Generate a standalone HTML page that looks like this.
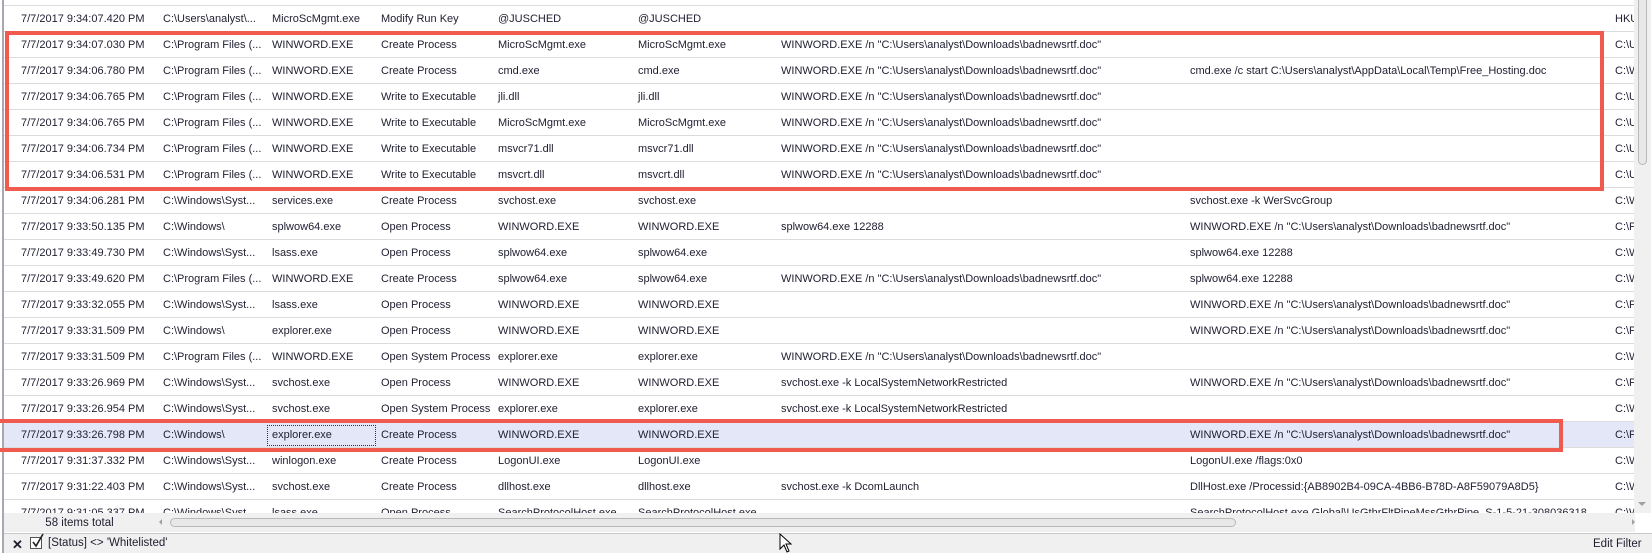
<!DOCTYPE html>
<html><head><meta charset="utf-8"><style>
*{margin:0;padding:0;box-sizing:border-box}
body{width:1652px;height:553px;overflow:hidden;background:#fff;font-family:"Liberation Sans",sans-serif;font-size:11px;color:#1e1e30;position:relative}
#grid{position:absolute;left:4px;top:0;width:1630px;height:513px;overflow:hidden;background:#fff}
.r{position:absolute;left:0;width:1630px;height:26px;border-bottom:1px solid #dcdcdc}
.r span{position:absolute;top:7px;white-space:nowrap}
.sel{background:#e3e7f7}
#lb{position:absolute;left:2px;top:0;width:2px;height:553px;background:#a8a8b0}
#vs{position:absolute;left:1634px;top:0;width:17px;height:513px;background:#f0f0f0}
#thumb{position:absolute;left:1638px;top:0;width:9px;height:165px;background:#e8e8e8;border:1px solid #b8b8b8;border-radius:0 0 5px 5px;border-top:none}
#hs{position:absolute;left:155px;top:513px;width:1480px;height:19px;background:#f0f0f0}
#hthumb{position:absolute;left:170px;top:518px;width:1066px;height:9px;border:1px solid #b8b8b8;border-radius:5px;background:#e8e8e8}
#cnt{position:absolute;left:4px;top:513px;width:151px;height:19px;background:#f0f0f0;text-align:center;line-height:20px;font-size:11.5px}
#fb{position:absolute;left:4px;top:533px;width:1648px;height:20px;background:#f0f0f0;border-top:1px solid #c8c8c8;font-size:11.5px}
.box{position:absolute;border:4px solid #f05a4f}
</style></head><body>
<div id="grid">
<div class="r" style="top:-20px"></div>
<div class="r" style="top:6px"><span style="left:17px">7/7/2017 9:34:07.420 PM</span><span style="left:159px">C:\Users\analyst\...</span><span style="left:268px">MicroScMgmt.exe</span><span style="left:377px">Modify Run Key</span><span style="left:494px">@JUSCHED</span><span style="left:634px">@JUSCHED</span><span style="left:1611px">HKU</span></div>
<div class="r" style="top:32px"><span style="left:17px">7/7/2017 9:34:07.030 PM</span><span style="left:159px">C:\Program Files (...</span><span style="left:268px">WINWORD.EXE</span><span style="left:377px">Create Process</span><span style="left:494px">MicroScMgmt.exe</span><span style="left:634px">MicroScMgmt.exe</span><span style="left:777px">WINWORD.EXE /n "C:\Users\analyst\Downloads\badnewsrtf.doc"</span><span style="left:1611px">C:\U</span></div>
<div class="r" style="top:58px"><span style="left:17px">7/7/2017 9:34:06.780 PM</span><span style="left:159px">C:\Program Files (...</span><span style="left:268px">WINWORD.EXE</span><span style="left:377px">Create Process</span><span style="left:494px">cmd.exe</span><span style="left:634px">cmd.exe</span><span style="left:777px">WINWORD.EXE /n "C:\Users\analyst\Downloads\badnewsrtf.doc"</span><span style="left:1186px">cmd.exe /c start C:\Users\analyst\AppData\Local\Temp\Free_Hosting.doc</span><span style="left:1611px">C:\W</span></div>
<div class="r" style="top:84px"><span style="left:17px">7/7/2017 9:34:06.765 PM</span><span style="left:159px">C:\Program Files (...</span><span style="left:268px">WINWORD.EXE</span><span style="left:377px">Write to Executable</span><span style="left:494px">jli.dll</span><span style="left:634px">jli.dll</span><span style="left:777px">WINWORD.EXE /n "C:\Users\analyst\Downloads\badnewsrtf.doc"</span><span style="left:1611px">C:\U</span></div>
<div class="r" style="top:110px"><span style="left:17px">7/7/2017 9:34:06.765 PM</span><span style="left:159px">C:\Program Files (...</span><span style="left:268px">WINWORD.EXE</span><span style="left:377px">Write to Executable</span><span style="left:494px">MicroScMgmt.exe</span><span style="left:634px">MicroScMgmt.exe</span><span style="left:777px">WINWORD.EXE /n "C:\Users\analyst\Downloads\badnewsrtf.doc"</span><span style="left:1611px">C:\U</span></div>
<div class="r" style="top:136px"><span style="left:17px">7/7/2017 9:34:06.734 PM</span><span style="left:159px">C:\Program Files (...</span><span style="left:268px">WINWORD.EXE</span><span style="left:377px">Write to Executable</span><span style="left:494px">msvcr71.dll</span><span style="left:634px">msvcr71.dll</span><span style="left:777px">WINWORD.EXE /n "C:\Users\analyst\Downloads\badnewsrtf.doc"</span><span style="left:1611px">C:\U</span></div>
<div class="r" style="top:162px"><span style="left:17px">7/7/2017 9:34:06.531 PM</span><span style="left:159px">C:\Program Files (...</span><span style="left:268px">WINWORD.EXE</span><span style="left:377px">Write to Executable</span><span style="left:494px">msvcrt.dll</span><span style="left:634px">msvcrt.dll</span><span style="left:777px">WINWORD.EXE /n "C:\Users\analyst\Downloads\badnewsrtf.doc"</span><span style="left:1611px">C:\U</span></div>
<div class="r" style="top:188px"><span style="left:17px">7/7/2017 9:34:06.281 PM</span><span style="left:159px">C:\Windows\Syst...</span><span style="left:268px">services.exe</span><span style="left:377px">Create Process</span><span style="left:494px">svchost.exe</span><span style="left:634px">svchost.exe</span><span style="left:1186px">svchost.exe -k WerSvcGroup</span><span style="left:1611px">C:\W</span></div>
<div class="r" style="top:214px"><span style="left:17px">7/7/2017 9:33:50.135 PM</span><span style="left:159px">C:\Windows\</span><span style="left:268px">splwow64.exe</span><span style="left:377px">Open Process</span><span style="left:494px">WINWORD.EXE</span><span style="left:634px">WINWORD.EXE</span><span style="left:777px">splwow64.exe 12288</span><span style="left:1186px">WINWORD.EXE /n "C:\Users\analyst\Downloads\badnewsrtf.doc"</span><span style="left:1611px">C:\P</span></div>
<div class="r" style="top:240px"><span style="left:17px">7/7/2017 9:33:49.730 PM</span><span style="left:159px">C:\Windows\Syst...</span><span style="left:268px">lsass.exe</span><span style="left:377px">Open Process</span><span style="left:494px">splwow64.exe</span><span style="left:634px">splwow64.exe</span><span style="left:1186px">splwow64.exe 12288</span><span style="left:1611px">C:\W</span></div>
<div class="r" style="top:266px"><span style="left:17px">7/7/2017 9:33:49.620 PM</span><span style="left:159px">C:\Program Files (...</span><span style="left:268px">WINWORD.EXE</span><span style="left:377px">Create Process</span><span style="left:494px">splwow64.exe</span><span style="left:634px">splwow64.exe</span><span style="left:777px">WINWORD.EXE /n "C:\Users\analyst\Downloads\badnewsrtf.doc"</span><span style="left:1186px">splwow64.exe 12288</span><span style="left:1611px">C:\W</span></div>
<div class="r" style="top:292px"><span style="left:17px">7/7/2017 9:33:32.055 PM</span><span style="left:159px">C:\Windows\Syst...</span><span style="left:268px">lsass.exe</span><span style="left:377px">Open Process</span><span style="left:494px">WINWORD.EXE</span><span style="left:634px">WINWORD.EXE</span><span style="left:1186px">WINWORD.EXE /n "C:\Users\analyst\Downloads\badnewsrtf.doc"</span><span style="left:1611px">C:\P</span></div>
<div class="r" style="top:318px"><span style="left:17px">7/7/2017 9:33:31.509 PM</span><span style="left:159px">C:\Windows\</span><span style="left:268px">explorer.exe</span><span style="left:377px">Open Process</span><span style="left:494px">WINWORD.EXE</span><span style="left:634px">WINWORD.EXE</span><span style="left:1186px">WINWORD.EXE /n "C:\Users\analyst\Downloads\badnewsrtf.doc"</span><span style="left:1611px">C:\P</span></div>
<div class="r" style="top:344px"><span style="left:17px">7/7/2017 9:33:31.509 PM</span><span style="left:159px">C:\Program Files (...</span><span style="left:268px">WINWORD.EXE</span><span style="left:377px">Open System Process</span><span style="left:494px">explorer.exe</span><span style="left:634px">explorer.exe</span><span style="left:777px">WINWORD.EXE /n "C:\Users\analyst\Downloads\badnewsrtf.doc"</span><span style="left:1611px">C:\W</span></div>
<div class="r" style="top:370px"><span style="left:17px">7/7/2017 9:33:26.969 PM</span><span style="left:159px">C:\Windows\Syst...</span><span style="left:268px">svchost.exe</span><span style="left:377px">Open Process</span><span style="left:494px">WINWORD.EXE</span><span style="left:634px">WINWORD.EXE</span><span style="left:777px">svchost.exe -k LocalSystemNetworkRestricted</span><span style="left:1186px">WINWORD.EXE /n "C:\Users\analyst\Downloads\badnewsrtf.doc"</span><span style="left:1611px">C:\P</span></div>
<div class="r" style="top:396px"><span style="left:17px">7/7/2017 9:33:26.954 PM</span><span style="left:159px">C:\Windows\Syst...</span><span style="left:268px">svchost.exe</span><span style="left:377px">Open System Process</span><span style="left:494px">explorer.exe</span><span style="left:634px">explorer.exe</span><span style="left:777px">svchost.exe -k LocalSystemNetworkRestricted</span><span style="left:1611px">C:\W</span></div>
<div class="r sel" style="top:422px"><span style="left:17px">7/7/2017 9:33:26.798 PM</span><span style="left:159px">C:\Windows\</span><div style="position:absolute;left:263px;top:3px;width:109px;height:21px;border:1px dotted #333"></div><span style="left:268px">explorer.exe</span><span style="left:377px">Create Process</span><span style="left:494px">WINWORD.EXE</span><span style="left:634px">WINWORD.EXE</span><span style="left:1186px">WINWORD.EXE /n "C:\Users\analyst\Downloads\badnewsrtf.doc"</span><span style="left:1611px">C:\P</span></div>
<div class="r" style="top:448px"><span style="left:17px">7/7/2017 9:31:37.332 PM</span><span style="left:159px">C:\Windows\Syst...</span><span style="left:268px">winlogon.exe</span><span style="left:377px">Create Process</span><span style="left:494px">LogonUI.exe</span><span style="left:634px">LogonUI.exe</span><span style="left:1186px">LogonUI.exe /flags:0x0</span><span style="left:1611px">C:\W</span></div>
<div class="r" style="top:474px"><span style="left:17px">7/7/2017 9:31:22.403 PM</span><span style="left:159px">C:\Windows\Syst...</span><span style="left:268px">svchost.exe</span><span style="left:377px">Create Process</span><span style="left:494px">dllhost.exe</span><span style="left:634px">dllhost.exe</span><span style="left:777px">svchost.exe -k DcomLaunch</span><span style="left:1186px">DllHost.exe /Processid:{AB8902B4-09CA-4BB6-B78D-A8F59079A8D5}</span><span style="left:1611px">C:\W</span></div>
<div class="r" style="top:500px"><span style="left:17px">7/7/2017 9:31:05.337 PM</span><span style="left:159px">C:\Windows\Syst...</span><span style="left:268px">lsass.exe</span><span style="left:377px">Open Process</span><span style="left:494px">SearchProtocolHost.exe</span><span style="left:634px">SearchProtocolHost.exe</span><span style="left:1186px">SearchProtocolHost.exe Global\UsGthrFltPipeMssGthrPipe_S-1-5-21-308036318...</span><span style="left:1611px">C:\W</span></div>
</div>
<div id="lb"></div>
<div id="vs"></div><div id="thumb"></div>
<div style="position:absolute;left:1638px;top:502px;width:0;height:0;border-left:4px solid transparent;border-right:4px solid transparent;border-top:4px solid #a0a0a0"></div>
<div id="cnt">58 items total</div>
<div id="hs"></div><div id="hthumb"></div>
<div style="position:absolute;left:159px;top:519px;width:0;height:0;border-top:3px solid transparent;border-bottom:3px solid transparent;border-right:3px solid #a0a0a0"></div>
<div style="position:absolute;left:1632px;top:519px;width:0;height:0;border-top:3px solid transparent;border-bottom:3px solid transparent;border-left:3px solid #a0a0a0"></div>
<div id="fb">
<span style="position:absolute;left:8px;top:3px;font-weight:bold;font-size:13px">✕</span>
<div style="position:absolute;left:26px;top:3px;width:12px;height:12px;border:1px solid #555;background:#fff"></div>
<svg style="position:absolute;left:27px;top:-1px" width="14" height="16"><path d="M2 9 L5 13 L12 1" stroke="#222" stroke-width="1.6" fill="none"/></svg>
<span style="position:absolute;left:44px;top:3px">[Status] &lt;&gt; 'Whitelisted'</span>
<span style="position:absolute;left:1589px;top:4px">Edit Filter</span>
</div>
<div class="box" style="left:5px;top:31px;width:1599px;height:160px"></div>
<div class="box" style="left:-4px;top:419px;width:1567px;height:33px"></div>
<svg style="position:absolute;left:779px;top:533px" width="14" height="20"><path d="M1 1 L1 16 L5 12 L8 19 L10 18 L7 11 L12 11 Z" fill="#fff" stroke="#000" stroke-width="1"/></svg>
</body></html>
